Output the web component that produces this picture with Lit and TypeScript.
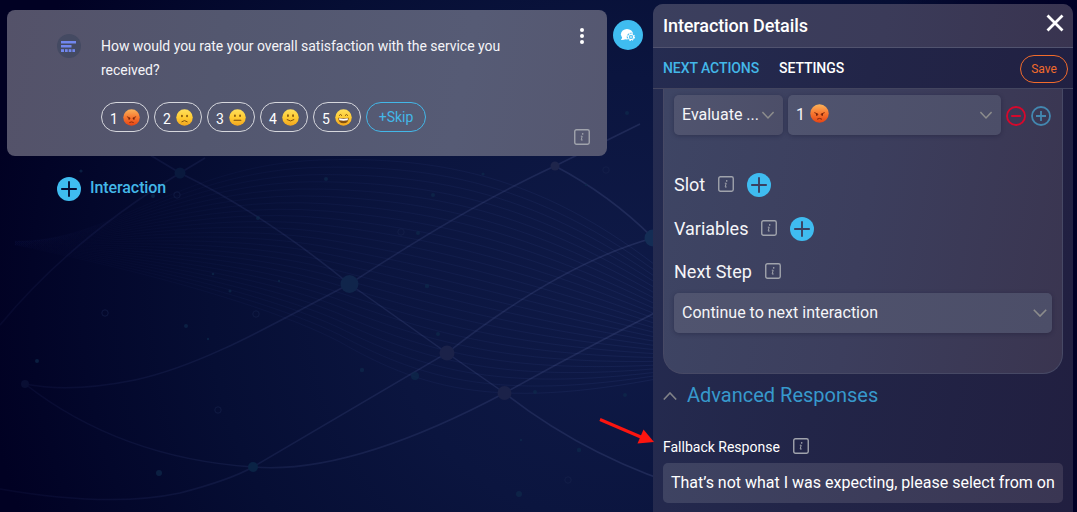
import { LitElement, html, css, svg, nothing } from "lit";
import { customElement, property } from "lit/decorators.js";

type Mood = "angry" | "sad" | "neutral" | "smile" | "grin";

@customElement("mood-face")
class MoodFace extends LitElement {
  static styles = css`
    :host { display: block; flex: none; width: 17px; height: 17px; }
    svg { display: block; width: 100%; height: 100%; }
  `;
  @property() mood: Mood = "neutral";

  features() {
    switch (this.mood) {
      case "angry":
        return svg`
          <path d="M5 9.200 8.300 10.700M15 9.200 11.700 10.700" stroke="#7a230c" stroke-width="1" stroke-linecap="round"/>
          <ellipse cx="7.200" cy="11.400" rx=".95" ry="1.200" fill="#6b1e0a"/><ellipse cx="12.800" cy="11.400" rx=".95" ry="1.200" fill="#6b1e0a"/>
          <path d="M7.800 15.800Q10 14.300 12.200 15.800" stroke="#7a230c" stroke-width="1" fill="none" stroke-linecap="round"/>`;
      case "sad":
        return svg`
          <ellipse cx="7" cy="8.200" rx="1" ry="1.500" fill="#7a4a0b"/><ellipse cx="13" cy="8.200" rx="1" ry="1.500" fill="#7a4a0b"/>
          <path d="M6.800 14.900Q10 12.100 13.200 14.900" stroke="#7a4a0b" stroke-width="1.100" fill="none" stroke-linecap="round"/>`;
      case "neutral":
        return svg`
          <ellipse cx="7" cy="8" rx="1" ry="1.500" fill="#7a4a0b"/><ellipse cx="13" cy="8" rx="1" ry="1.500" fill="#7a4a0b"/>
          <path d="M6 13.300H14" stroke="#7a4a0b" stroke-width="1.200" stroke-linecap="round"/>`;
      case "smile":
        return svg`
          <ellipse cx="7" cy="7.800" rx="1" ry="1.500" fill="#7a4a0b"/><ellipse cx="13" cy="7.800" rx="1" ry="1.500" fill="#7a4a0b"/>
          <path d="M6 12.600Q10 15.800 14 12.600" stroke="#7a4a0b" stroke-width="1.100" fill="none" stroke-linecap="round"/>`;
      default:
        return svg`
          <path d="M5 7.500Q6.500 5 8 7.500M12 7.500Q13.500 5 15 7.500" stroke="#7a4a0b" stroke-width="1.100" fill="none" stroke-linecap="round"/>
          <path d="M3.800 10.200Q10 11.200 16.200 10.200Q16 16.900 10 16.900Q4 16.900 3.800 10.200Z" fill="#84500f"/>
          <path d="M4.700 11Q10 11.900 15.300 11L14.900 13.300Q10 14.200 5.100 13.300Z" fill="#fff"/>`;
    }
  }

  render() {
    const angry = this.mood === "angry";
    return html`<svg viewBox="0 0 20 20">
      <defs><linearGradient id="g" x1="0" y1="0" x2="0" y2="1">
        <stop offset="0" stop-color=${angry ? "#fbb35a" : "#ffdf5c"}/>
        <stop offset=".5" stop-color=${angry ? "#f7762f" : "#ffcc33"}/>
        <stop offset="1" stop-color=${angry ? "#e54414" : "#f2a51e"}/>
      </linearGradient></defs>
      <circle cx="10" cy="10" r="9.700" fill="url(#g)"/>
      ${this.features()}
    </svg>`;
  }
}

@customElement("ui-icon")
class UiIcon extends LitElement {
  static styles = css`
    :host { display: block; flex: none; color: #3b4060; }
    svg { display: block; }
  `;
  @property() name = "";

  render() {
    switch (this.name) {
      case "info":
        return html`<svg width="16" height="16" viewBox="0 0 16 16" fill="none">
          <rect x=".75" y=".75" width="14.500" height="14.500" rx="1.700" stroke="#a0a3ac" stroke-width="1.400"/>
          <circle cx="8.700" cy="4.900" r=".8" fill="#a0a3ac"/>
          <path d="M6.800 7.200H8.200L7.200 11Q7.200 11.600 8.700 10.900" stroke="#a0a3ac" stroke-width="1"/></svg>`;
      case "add":
        return html`<svg width="24" height="24" viewBox="0 0 24 24">
          <circle cx="12" cy="12" r="12" fill="#3fbcf0"/>
          <path d="M12 4.200V19.800M4.200 12H19.800" stroke="currentColor" stroke-width="1.900"/></svg>`;
      case "down":
        return html`<svg width="14" height="8" viewBox="0 0 14 8" fill="none"><path d="M.8 .8 7 7.100 13.200 .8" stroke="#8c8c8c" stroke-width="1.600"/></svg>`;
      case "down-sm":
        return html`<svg width="12" height="8" viewBox="0 0 12 8" fill="none"><path d="M.4 1 6 6.900 11.600 1" stroke="#8c8c8c" stroke-width="1.500"/></svg>`;
      case "up":
        return html`<svg width="14" height="8" viewBox="0 0 14 8" fill="none"><path d="M.8 7.500 7 1 13.200 7.500" stroke="#808288" stroke-width="1.600"/></svg>`;
      case "minus":
        return html`<svg width="20" height="20" viewBox="0 0 20 20" fill="none" stroke="#d6082c" stroke-width="1.900"><circle cx="10" cy="10" r="9"/><path d="M5.200 10H14.800"/></svg>`;
      case "plus":
        return html`<svg width="20" height="20" viewBox="0 0 20 20" fill="none" stroke="#4387b0" stroke-width="1.800"><circle cx="10" cy="10" r="9"/><path d="M5 10H15M10 5V15"/></svg>`;
      case "close":
        return html`<svg width="18" height="18" viewBox="0 0 18 18"><path d="M1.500 1.500 16.500 16.500M16.500 1.500 1.500 16.500" stroke="#fff" stroke-width="2.800"/></svg>`;
      case "more":
        return html`<svg width="4" height="16" viewBox="0 0 4 16" fill="#fff"><circle cx="2" cy="2" r="2"/><circle cx="2" cy="8" r="2"/><circle cx="2" cy="14" r="2"/></svg>`;
      case "form":
        return html`<svg width="24" height="24" viewBox="0 0 24 24" fill="#7187ee">
          <circle cx="12" cy="12" r="12" fill="#444a62"/>
          <rect x="4" y="7" width="15" height="2.500"/><rect x="4" y="11" width="10.500" height="2.500"/>
          <rect x="4" y="15.200" width="3" height="2.800"/><rect x="8" y="15.200" width="2.700" height="2.800"/>
          <rect x="11.700" y="15.200" width="2.700" height="2.800"/><rect x="15.400" y="15.200" width="2.600" height="2.800"/></svg>`;
      case "chat":
        return html`<svg width="30" height="30" viewBox="0 0 30 30">
          <circle cx="15" cy="15" r="15" fill="#3fbcf0"/>
          <ellipse cx="14" cy="14.200" rx="6.100" ry="5.200" fill="#fff"/>
          <path d="M9.300 15.500Q9.500 18.500 7.900 20Q11.200 20.200 13 18.500Z" fill="#fff"/>
          <circle cx="18" cy="17" r="4.300" fill="#3fbcf0"/>
          <circle cx="18" cy="17" r="3.400" fill="none" stroke="#fff" stroke-width="1.100" stroke-dasharray="1.600 1.070"/>
          <circle cx="18" cy="17" r="2.700" fill="none" stroke="#fff" stroke-width="1"/>
          <circle cx="18" cy="17" r="1" fill="none" stroke="#fff" stroke-width=".7"/></svg>`;
      default:
        return nothing;
    }
  }
}

@customElement("network-backdrop")
class NetworkBackdrop extends LitElement {
  static styles = css`
    :host { display: block; position: absolute; inset: 0; z-index: -1;
      background: radial-gradient(ellipse 640px 620px at 620px 300px, #0f1a47 0%, #0b153f 36%, #060e34 64%, #03072b 84%, #010123 100%); }
    svg { display: block; width: 100%; height: 100%; }
  `;

  wave(t: number) {
    const mix = (a: number, b: number) => (a + (b - a) * t).toFixed(1);
    return svg`<path d=${`M15 ${mix(241, 245)}C${mix(110, 40)} ${mix(243, 250)} ${mix(180, 240)} ${mix(165, 290)} ${mix(320, 340)} ${mix(160, 342)}C${mix(470, 430)} ${mix(155, 394)} ${mix(580, 510)} ${mix(190, 412)} ${mix(720, 700)} ${mix(320, 370)}`}/>`;
  }

  render() {
    const nodes = [
      [349.5, 284, 9, "#10254b"], [447, 353, 7.5, "#1b2249"], [504.5, 393, 7, "#1b2249"], [253, 467, 5, "#0a2345"],
      [180, 173, 5.5, "#09193d"], [555, 166, 4.5, "#1e254b"], [653, 238, 8.5, "#142d55"], [25, 384, 4, "#090e33"],
    ] as const;
    const dots = [
      [37, 361, 2], [159, 473, 3], [186, 326, 2], [258, 218, 2], [326, 179, 2], [433, 195, 2], [418, 233, 2], [427, 286, 2.2],
      [438, 334, 2], [362, 370, 2.2], [415, 376, 4], [519, 494, 3], [579, 450, 2.2], [625, 395, 2], [535, 392, 2], [81, 171, 1.6],
      [483, 174, 1.6], [586, 185, 1.3], [279, 281, 1.2], [208, 339, 1.2], [521, 440, 1.3], [627, 113, 2], [213, 274, 1.3], [230, 291, 1.5],
      [153, 196, 2],
    ];
    const rings = [[401, 232], [256, 314], [105, 313], [177, 195], [218, 410], [568, 480], [606, 170]];
    return html`<svg viewBox="0 0 1077 512" preserveAspectRatio="xMinYMin slice">
      <defs>
        <linearGradient id="edge"><stop offset="0" stop-color="#000026" stop-opacity="0"/><stop offset="1" stop-color="#000026"/></linearGradient>
        <linearGradient id="wave" gradientUnits="userSpaceOnUse" x1="0" y1="0" x2="650" y2="0">
          <stop offset="0" stop-color="#2e3c90" stop-opacity=".01"/><stop offset=".4" stop-color="#3b4ea0" stop-opacity=".08"/>
          <stop offset="1" stop-color="#4f65b0" stop-opacity=".13"/></linearGradient>
        <linearGradient id="link" gradientUnits="userSpaceOnUse" x1="0" y1="0" x2="650" y2="0">
          <stop offset="0" stop-color="#4350a0" stop-opacity=".08"/><stop offset=".5" stop-color="#5865a5" stop-opacity=".17"/>
          <stop offset="1" stop-color="#6b76b0" stop-opacity=".2"/></linearGradient>
      </defs>
      <g fill="none" stroke="url(#wave)" stroke-width=".9">
        ${Array.from({ length: 26 }, (_, i) => this.wave(i / 25))}
      </g>
      <g fill="none" stroke="url(#link)" stroke-width="1.500">
        <path d="M145 152 180 173Q262 213 349.500 284L447 353 504.500 393Q590 460 700 492" />
        <path d="M25 384Q70 393 135 380C205 365 280 320 349.500 284Q470 205 555 166L640 124" />
        <path d="M25 384Q120 458 253 467Q350 475 504.500 393Q600 340 700 290" />
        <path d="M0 489Q110 508 180 493Q230 480 253 467L447 353Q560 264 653 238" />
        <path d="M555 166Q610 195 653 238" />
        <path d="M0 325Q70 240 180 173L205 158"/>
      </g>
      ${nodes.map(([x, y, r, c]) => svg`<circle cx=${x} cy=${y} r=${r} fill=${c}/>`)}
      ${dots.map(([x, y, r]) => svg`<circle cx=${x} cy=${y} r=${r} fill="#0e2a4c" opacity=".7"/>`)}
      ${rings.map(([x, y]) => svg`<circle cx=${x} cy=${y} r="3.200" fill="none" stroke="#18234c" opacity=".6"/>`)}
      <rect x="900" width="177" height="512" fill="url(#edge)"/>
    </svg>`;
  }
}

@customElement("app-root")
class AppRoot extends LitElement {
  static styles = css`
    :host { display: flex; position: relative; z-index: 0; box-sizing: border-box; width: 1077px; height: 512px; overflow: hidden;
      padding: 4px 4px 0 7px; font-family: Roboto, "Liberation Sans", sans-serif; color: #fff; }
    * { box-sizing: border-box; }
    .canvas { width: 600px; padding-top: 6px; flex: none; }
    .card { height: 146px; display: flex; padding: 17px 17px 11px 50px; border-radius: 8px;
      background: linear-gradient(100deg, #545269 0%, #53576f 35%, #565b75 75%, #555770 100%); }
    .form-icon { margin-top: 7px; }
    .body { margin-left: 20px; width: 425px; padding-top: 7px; }
    .question { margin: 0; font-size: 14px; line-height: 24px; letter-spacing: -.03px; color: #f4f4f8; }
    .pills { display: flex; gap: 5px; margin-top: 20px; }
    .pill { width: 48px; height: 30px; border: 1px solid #d6d7dd; border-radius: 15px; display: flex; align-items: center; gap: 5px;
      padding: 1px 0 0 8px; font-size: 14px; line-height: 30px; }
    .digit { padding-top: 2px; width: 8px; }
    .skip { width: 60px; border-color: #43b7e8; color: #43b7e8; justify-content: center; padding: 0; }
    .tools { margin-left: auto; display: flex; flex-direction: column; align-items: center; justify-content: space-between; padding-top: 1px; }
    .add-row { display: flex; align-items: center; gap: 9px; margin: 21px 0 0 50px; color: #43b7e8; font-size: 16px; line-height: 24px;
      font-weight: 500; letter-spacing: -.08px; }
    .add-row ui-icon { color: #060d33; }
    .add-row span { margin-top: -3px; }
    .chat { margin: 16px 10px 0 6px; }
    .panel { width: 420px; height: 508px; border-radius: 10px 10px 0 0; overflow: hidden;
      background: linear-gradient(100deg, #252c51 0%, #222548 45%, #211f40 100%); }
    .head { height: 44px; display: flex; justify-content: space-between; padding: 10px 9px 0 10px; border-bottom: 1px solid #51536f;
      background: linear-gradient(95deg, #3b3f5e, #3b3b59 55%, #393450); }
    .title { font-size: 18px; line-height: 24px; font-weight: 500; letter-spacing: -.1px; }
    .tabs { height: 41px; display: flex; align-items: center; padding: 0 5px 0 10px; gap: 20px; border-bottom: 1px solid #43455f;
      font-size: 14px; font-weight: 500; letter-spacing: -.08px; }
    .active { color: #43b7e8; }
    .save { margin: 1px 0 0 auto; width: 48px; height: 28px; border: 1px solid #f26b2b; border-radius: 14px; color: #f26b2b; font-size: 12px;
      font-weight: 400; line-height: 26px; text-align: center; letter-spacing: 0; }
    .scroll { padding: 0 10px; }
    .rule { height: 285px; border: 1px solid #474965; border-top: 0; border-radius: 0 0 20px 20px; padding: 6px 10px;
      background: linear-gradient(100deg, #3e4564 0%, #3c3e5d 50%, #3a3550 100%); }
    .row { display: flex; align-items: center; }
    .conds { gap: 5px; }
    .select { height: 40px; display: flex; align-items: center; border-radius: 5px; padding: 0 9px 0 8px; font-size: 16px;
      background: linear-gradient(100deg, #50546f, #4c4e68); box-shadow: 0 1px 4px rgba(20, 20, 45, .35); color: #f5f5f8; }
    .select span { margin-top: -2px; }
    .select ui-icon { margin-left: auto; }
    .evaluate { width: 109px; }
    .value { width: 213px; gap: 5px; }
    .value mood-face { width: 19px; height: 19px; margin-top: -4px; }
    .conds > ui-icon { margin-top: 2px; }
    .field { height: 24px; font-size: 18px; gap: 13px; color: #f5f5f8; }
    .field span { margin-top: -1px; }
    .field ui-icon[name="info"] { margin-top: -2px; }
    .slot { margin-top: 38px; }
    .vars { margin-top: 20px; }
    .next { margin-top: 19px; }
    .step { margin-top: 9px; padding-right: 5px; }
    .adv { height: 24px; margin-top: 9px; gap: 10px; color: #3799cc; font-size: 20px; }
    .adv ui-icon { margin-top: 2px; }
    .fallback { height: 20px; margin-top: 30px; gap: 13px; font-size: 14px; }
    .fallback ui-icon { margin-top: -2px; }
    .input { height: 40px; margin-top: 6px; padding: 0 0 0 8px; border-radius: 5px; font-size: 16px; line-height: 40px; white-space: nowrap;
      overflow: hidden; background: linear-gradient(95deg, #3e4362, #3a3653); }
    .arrow { position: absolute; left: 596px; top: 414px; }
  `;

  render() {
    const moods: Mood[] = ["angry", "sad", "neutral", "smile", "grin"];
    return html`
      <network-backdrop></network-backdrop>
      <main class="canvas">
        <section class="card">
          <ui-icon class="form-icon" name="form"></ui-icon>
          <div class="body">
            <p class="question">How would you rate your overall satisfaction with the service you received?</p>
            <div class="pills">
              ${moods.map((m, i) => html`<div class="pill"><span class="digit">${i + 1}</span><mood-face mood=${m}></mood-face></div>`)}
              <div class="pill skip">+Skip</div>
            </div>
          </div>
          <div class="tools"><ui-icon name="more"></ui-icon><ui-icon name="info"></ui-icon></div>
        </section>
        <div class="add-row"><ui-icon name="add"></ui-icon><span>Interaction</span></div>
      </main>
      <ui-icon class="chat" name="chat"></ui-icon>
      <aside class="panel">
        <header class="head"><span class="title">Interaction Details</span><ui-icon name="close"></ui-icon></header>
        <nav class="tabs"><span class="active">NEXT ACTIONS</span><span>SETTINGS</span><span class="save">Save</span></nav>
        <div class="scroll">
          <div class="rule">
            <div class="row conds">
              <div class="select evaluate"><span>Evaluate ...</span><ui-icon name="down-sm"></ui-icon></div>
              <div class="select value"><span>1</span><mood-face mood="angry"></mood-face><ui-icon name="down-sm"></ui-icon></div>
              <ui-icon name="minus"></ui-icon><ui-icon name="plus"></ui-icon>
            </div>
            <div class="row field slot"><span>Slot</span><ui-icon name="info"></ui-icon><ui-icon name="add"></ui-icon></div>
            <div class="row field vars"><span>Variables</span><ui-icon name="info"></ui-icon><ui-icon name="add"></ui-icon></div>
            <div class="row field next"><span>Next Step</span><ui-icon name="info"></ui-icon></div>
            <div class="select step"><span>Continue to next interaction</span><ui-icon name="down"></ui-icon></div>
          </div>
          <div class="row adv"><ui-icon name="up"></ui-icon><span>Advanced Responses</span></div>
          <div class="row fallback"><span>Fallback Response</span><ui-icon name="info"></ui-icon></div>
          <div class="input">That’s not what I was expecting, please select from on</div>
        </div>
      </aside>
      <svg class="arrow" width="60" height="34" viewBox="0 0 60 34"><path d="M4 5.500 46 23.500" stroke="#fb1510" stroke-width="3"/><path d="M47.500 15.500 58 28 41.500 29.500Z" fill="#fb1510"/></svg>
    `;
  }
}
